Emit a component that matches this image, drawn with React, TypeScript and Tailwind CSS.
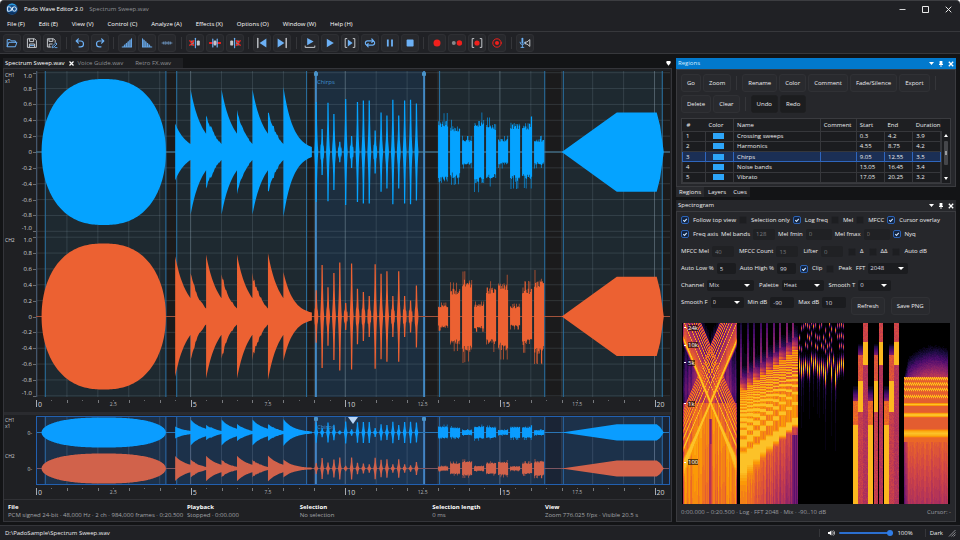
import { useMemo, type ReactNode } from "react";

const DURATION = 20.5;

const REGIONS = [
  { id: 1, name: "Crossing sweeps", start: 0.3, end: 4.2, duration: "3.9" },
  { id: 2, name: "Harmonics", start: 4.55, end: 8.75, duration: "4.2" },
  { id: 3, name: "Chirps", start: 9.05, end: 12.55, duration: "3.5" },
  { id: 4, name: "Noise bands", start: 13.05, end: 16.45, duration: "3.4" },
  { id: 5, name: "Vibrato", start: 17.05, end: 20.25, duration: "3.2" },
];
const SELECTED = 3;

const MENUS = [
  "File (F)",
  "Edit (E)",
  "View (V)",
  "Control (C)",
  "Analyze (A)",
  "Effects (X)",
  "Options (O)",
  "Window (W)",
  "Help (H)",
];

function rand(n: number) {
  const s = Math.sin(n * 127.1 + 11.7) * 43758.5453;
  return s - Math.floor(s);
}

/* ---------- waveforms ---------- */

type Point = [number, number, number?]; // seconds, amplitude up, amplitude down

type Channel = {
  plucks: [number, number][];
  tail: number;
  chirps: number[];
  noise: number[];
  seed: number;
};

const CH1: Channel = {
  plucks: [[0.36, 0.1], [0.79, 0.23], [0.48, 0.1], [0.79, 0.23], [0.5, 0.1], [0.79, 0.23], [0.53, 0.1]],
  tail: 0.8,
  chirps: [0.63, 0.29, 0.62, 0.48, 0.13, 0.67, 0.2, 0.63, 0.65, 0.65, 0.27, 0.5, 0.46, 0.66, 0.46, 0.65, 0.66, 0.61],
  noise: [0.36, 0.3, 0.15, 0.37, 0.32, 0.15, 0.34, 0.33, 0.15],
  seed: 3,
};

const CH2: Channel = {
  plucks: [[0.76, 0.23], [0.52, 0.1], [0.78, 0.23], [0.52, 0.1], [0.78, 0.23], [0.52, 0.1], [0.8, 0.23]],
  tail: 0.54,
  chirps: [0.33, 0.65, 0.37, 0.55, 0.68, 0.17, 0.67, 0.35, 0.31, 0.26, 0.66, 0.54, 0.57, 0.26, 0.57, 0.26, 0.2, 0.39],
  noise: [0.13, 0.32, 0.42, 0.14, 0.33, 0.39, 0.12, 0.33, 0.43],
  seed: 71,
};

function envelope(ch: Channel): Point[][] {
  const shapes: Point[][] = [];

  const sweep: Point[] = [];
  for (let i = 0; i <= 120; i++) {
    const u = -Math.cos((i / 120) * Math.PI);
    sweep.push([2.19 + u * 2.01, 0.92 * Math.pow(Math.max(0, 1 - Math.pow(Math.abs(u), 2.45)), 1 / 2.05)]);
  }
  shapes.push(sweep);

  const harmonics: Point[] = [];
  ch.plucks.forEach(([from, to], n) => {
    const rough = from < 0.6 && from > 0.4 ? 0.08 : 0;
    for (let i = 0; i <= 16; i++) {
      const k = i / 16;
      const amp = to + (from - to) * (Math.exp(-1.7 * k) - Math.exp(-1.7) * k);
      const jag = rough * (rand(i + n * 20 + ch.seed) - 0.4) * (1 - k);
      harmonics.push([4.5 + n * 0.5 + k * 0.5, amp + jag]);
    }
  });
  for (let i = 0; i <= 24; i++) {
    const k = i / 24;
    harmonics.push([8 + k * 0.92, 0.02 + ch.tail * Math.exp(-2.9 * k)]);
  }
  shapes.push(harmonics);

  ch.chirps.forEach((amp, n) => {
    const c = 9.06 + n * 0.1906;
    shapes.push([
      [c - 0.06, 0.02],
      [c - 0.05, 0.09],
      [c - 0.035, amp * 0.35],
      [c - 0.024, amp * 0.6],
      [c - 0.02, amp],
      [c + 0.02, amp],
      [c + 0.03, amp * 0.55],
      [c + 0.04, amp * 0.3],
      [c + 0.055, 0.07],
      [c + 0.065, 0.02],
    ]);
  });

  ch.noise.forEach((amp, n) => {
    const bar: Point[] = [];
    for (let i = 0; i < 16; i++) {
      const a = rand(i + n * 40 + ch.seed * 5);
      const b = rand(i + n * 40 + ch.seed * 9 + 500);
      const up = amp * (0.85 + 0.3 * a + (a > 0.86 ? 0.22 : 0));
      const down = amp * (0.85 + 0.3 * b + (b > 0.84 ? 0.25 : 0));
      const t = 13 + n * 0.388 + i * 0.0203;
      bar.push([t, up, down], [t + 0.0203, up, down]);
    }
    shapes.push(bar);
  });

  shapes.push([
    [17, 0],
    [18.78, 0.5],
    [20.07, 0.5],
    [20.18, 0.33],
    [20.3, 0],
  ]);
  return shapes;
}

function wavePath(shapes: Point[][], mid: number, scale: number) {
  return shapes
    .map((pts) => {
      const up = pts.map(([t, a]) => `${(t * 100).toFixed(1)} ${(mid - a * scale).toFixed(1)}`);
      const down = pts.map(([t, a, d]) => `${(t * 100).toFixed(1)} ${(mid + (d ?? a) * scale).toFixed(1)}`).reverse();
      return `M${up.join("L")}L${down.join("L")}Z`;
    })
    .join("");
}

const CH1_SHAPES = envelope(CH1);
const CH2_SHAPES = envelope(CH2);
const LEVELS = [1, 0.8, 0.6, 0.4, 0.2, 0, -0.2, -0.4, -0.6, -0.8, -1];
const SECONDS = Array.from({ length: 20 }, (_, i) => i + 1);

function MainPlot() {
  return (
    <svg viewBox="0 0 2050 326" preserveAspectRatio="none" className="absolute inset-0 h-full w-full" aria-label="Waveform">
      <rect width="2050" height="326" fill="#1b1b1c" />
      {REGIONS.map((r) => (
        <rect key={r.id} x={r.start * 100} y="0" width={(r.end - r.start) * 100} height="326" fill={r.id === SELECTED ? "#1c2e3f" : "#1e2930"} />
      ))}
      <g stroke="#9fb6c4" strokeWidth="1">
        {SECONDS.map((s) => (
          <line key={s} x1={s * 100} x2={s * 100} y1="0" y2="326" strokeOpacity={s % 5 === 0 ? 0.38 : 0.17} vectorEffect="non-scaling-stroke" />
        ))}
        {[81, 245.5].map((mid) =>
          LEVELS.map((l) => (
            <line key={`${mid}${l}`} x1="0" x2="2050" y1={mid - l * 79.3} y2={mid - l * 79.3} strokeOpacity="0.17" vectorEffect="non-scaling-stroke" />
          )),
        )}
      </g>
      <g strokeWidth="1">
        {REGIONS.map((r) => (
          <g key={r.id} stroke={r.id === SELECTED ? "#4389c4" : "#2b74a6"} strokeWidth={r.id === SELECTED ? 2 : 1}>
            <line x1={r.start * 100} x2={r.start * 100} y1="0" y2="326" vectorEffect="non-scaling-stroke" />
            <line x1={r.end * 100} x2={r.end * 100} y1="0" y2="326" vectorEffect="non-scaling-stroke" />
          </g>
        ))}
        <line x1="1" x2="1" y1="0" y2="326" stroke="#44566c" strokeWidth="2" vectorEffect="non-scaling-stroke" />
        <line x1="0" x2="2050" y1="81" y2="81" stroke="#4c87a8" vectorEffect="non-scaling-stroke" />
        <line x1="0" x2="2050" y1="245.5" y2="245.5" stroke="#a3523a" vectorEffect="non-scaling-stroke" />
      </g>
      <path d={wavePath(CH1_SHAPES, 81, 79.3)} fill="#05a3ff" />
      <path d={wavePath(CH2_SHAPES, 245.5, 79.3)} fill="#ec6132" />
    </svg>
  );
}

function OverviewPlot() {
  return (
    <svg viewBox="0 0 2050 69" preserveAspectRatio="none" className="absolute inset-0 h-full w-full" aria-label="Overview">
      <rect width="2050" height="69" fill="#1a2435" />
      {REGIONS.map((r) => (
        <rect key={r.id} x={r.start * 100} y="0" width={(r.end - r.start) * 100} height="69" fill={r.id === SELECTED ? "#1b3553" : "#1c314a"} />
      ))}
      {SECONDS.map((s) => (
        <line key={s} x1={s * 100} x2={s * 100} y1="0" y2="69" stroke="#9fb6d4" strokeOpacity={s % 5 === 0 ? 0.4 : 0.18} vectorEffect="non-scaling-stroke" />
      ))}
      {REGIONS.map((r) => (
        <g key={r.id} stroke={r.id === SELECTED ? "#4383c4" : "#2b6cab"} strokeWidth={r.id === SELECTED ? 2 : 1}>
          <line x1={r.start * 100} x2={r.start * 100} y1="0" y2="69" vectorEffect="non-scaling-stroke" />
          <line x1={r.end * 100} x2={r.end * 100} y1="0" y2="69" vectorEffect="non-scaling-stroke" />
        </g>
      ))}
      <line x1="0" x2="2050" y1="16.5" y2="16.5" stroke="#2a74b4" vectorEffect="non-scaling-stroke" />
      <line x1="0" x2="2050" y1="52.5" y2="52.5" stroke="#7d5560" vectorEffect="non-scaling-stroke" />
      <path d={wavePath(CH1_SHAPES, 16.5, 16.3)} fill="#0a9dff" />
      <path d={wavePath(CH2_SHAPES, 52.5, 16.3)} fill="#d1624b" />
      <rect x="0" y="0" width="2050" height="69" fill="none" stroke="#2260b0" strokeWidth="2" vectorEffect="non-scaling-stroke" />
    </svg>
  );
}

function RegionMarks({ label }: { label: string }) {
  const r = REGIONS[SELECTED - 1];
  return (
    <>
      {[r.start, r.end].map((t) => (
        <span key={t} className="absolute top-px size-1 -translate-x-1/2 rounded-[1px] bg-[#4a93c8]" style={{ left: `${(t / DURATION) * 100}%` }} />
      ))}
      <span className="absolute top-[7px] pl-px text-[6px] leading-[8px] text-[#3f8fd0]" style={{ left: `${(r.start / DURATION) * 100}%` }}>
        {label}
      </span>
    </>
  );
}

function Ruler() {
  const marks = Array.from({ length: 41 }, (_, i) => i * 0.5);
  return (
    <div className="relative ml-8 mr-px h-3.5">
      {marks.map((t) => (
        <span
          key={t}
          className={`absolute top-[3px] w-px ${t % 5 === 0 ? "h-[7px] bg-[#a8abb0]" : t % 1 === 0 ? "h-[3px] bg-[#77797d]" : "h-px bg-[#66686c]"}`}
          style={{ left: `${(t / DURATION) * 100}%` }}
        />
      ))}
      {[0, 5, 10, 15, 20].map((t) => (
        <span key={t} className="absolute top-[3px] pl-0.5 text-[7px] leading-[9px] text-[#d3d5d8]" style={{ left: `${(t / DURATION) * 100}%` }}>
          {t}
        </span>
      ))}
      {[2.5, 7.5, 12.5, 17.5].map((t) => (
        <span key={t} className="absolute top-[3px] -translate-x-1/2 text-[5px] leading-[9px] text-[#b4b6ba]" style={{ left: `${(t / DURATION) * 100}%` }}>
          {t}
        </span>
      ))}
    </div>
  );
}

function levelTop(mid: number, level: number) {
  const nudge = level === 1 ? 3 : level === -1 ? -3 : 0;
  return `${((mid - level * 79.3 + nudge) / 326) * 100}%`;
}

function LevelAxis() {
  return (
    <div className="relative w-8 shrink-0 text-[6px] leading-[8px] text-[#d3d5d8]">
      <div className="absolute left-px top-px flex flex-col text-[5px] leading-[6px]">
        <span>CH1</span>
        <span>x1</span>
      </div>
      <span className="absolute left-px top-[165px] text-[5px]">CH2</span>
      {[81, 245.5].map((mid) =>
        LEVELS.map((l) => (
          <span key={`${mid}${l}`} className="absolute right-1 -translate-y-1/2" style={{ top: levelTop(mid, l) }}>
            {l === 0 ? "0" : l.toFixed(1)}
          </span>
        )),
      )}
      {[81, 245.5].map((mid) =>
        LEVELS.map((l) => (
          <span key={`t${mid}${l}`} className="absolute right-0 h-px w-[3px] bg-[#6a6c70]" style={{ top: `${((mid - l * 79.3) / 326) * 100}%` }} />
        )),
      )}
    </div>
  );
}

/* ---------- spectrogram ---------- */

const HEAT = ["#000004", "#1b0c41", "#4a0c6b", "#781c6d", "#a52c60", "#cf4446", "#ed6925", "#fb9b06", "#fcc228"];
const STEPS = 32;
const SPEC_W = 268;
const SPEC_H = 181;

function heatColor(v: number) {
  const p = Math.min(0.9999, Math.max(0, v)) * (HEAT.length - 1);
  const i = Math.floor(p);
  const f = p - i;
  const ch = (hex: string, n: number) => parseInt(hex.slice(1 + n * 2, 3 + n * 2), 16);
  const mix = [0, 1, 2].map((n) => Math.round(ch(HEAT[i], n) + (ch(HEAT[i + 1], n) - ch(HEAT[i], n)) * f));
  return `rgb(${mix.join(",")})`;
}

const freqAt = (y: number) => 24000 * Math.pow(10, -y / 58.6);
const yAt = (f: number) => 58.6 * Math.log10(24000 / f);

function sweeps(x: number, y: number) {
  const d = x - 28;
  const f = freqAt(y);
  const w = 1.1 + 58.6 * Math.log10(1 + 22 / f);
  const side = Math.abs(d);
  let v = 0;
  for (let k = 1; k <= 9; k++) {
    const off = 58.6 * Math.log10(k);
    for (const s of [-1, 1]) {
      const line = 79 + s * d * 2.36 - off;
      const q = (y - line) / (k === 1 ? w * 2 + 1 : w);
      v = Math.max(v, (1.08 - k * 0.035) * Math.exp(-q * q * 0.5));
    }
  }
  const arm = 79 + side * 2.36;
  const wing = 79 - side * 2.36;
  const streak = rand(x * 3.1) * 0.16;
  if (y > arm) {
    const depth = Math.min(1, (y - arm) / 90);
    v = Math.max(v, 0.92 - depth * 0.08 - streak);
  } else if (y > 79) {
    v = Math.max(v, 0.86 * Math.exp(-(arm - y) / 220) - streak);
  } else if (y > wing) {
    v = Math.max(v, 0.8 - side * 0.018 - Math.abs(y - 66) * 0.005 - streak);
  } else {
    v = Math.max(v, 0.8 - (wing - y) / 90 - streak * 0.5);
  }
  if (y > 95 && side < 2) v = Math.min(v, 0.42 + side * 0.12);
  if (y > 120) v = Math.max(v, 0.78 - streak * 0.8 - (side < 6 ? 0.12 : 0));
  if (y < 18 && side < 9 - y * 0.45) v = Math.min(v, 0.14 + y * 0.012);
  return x < 2 || x > 53 ? v * 0.75 : v;
}

function plucked(x: number, y: number) {
  const n = Math.min(8, Math.floor((x - 58) / 6.5));
  const inner = ((x - 58) % 6.5) / 6.5;
  const f0 = 110 * Math.pow(2, n * 0.28);
  const f = freqAt(y);
  const w = 1.1 + 58.6 * Math.log10(1 + 34 / f);
  const roof = yAt(f0 * 26);
  let v = 0;
  for (let k = 1; k <= 26; k++) {
    const yk = yAt(f0 * k);
    const q = (y - yk) / (k === 1 ? w * 2 : k < 7 ? w * 1.3 : w * 0.8);
    v = Math.max(v, (1.15 - k * 0.016) * Math.exp(-q * q * 0.5));
  }
  const base = yAt(f0);
  const floor = y < base ? 0.88 - Math.max(0, 75 - y) * 0.007 : 0.94 - (y - base) * 0.0024 - n * 0.035;
  v = Math.max(v, floor - rand(x * 1.7) * 0.12);
  if (n === 8 && y > base + 14) v = Math.min(v, 0.42 - rand(x) * 0.14);
  if (y < roof + 12) v *= Math.max(0.04, 1 - (roof + 12 - y) / 26) * (1 - inner * 0.3);
  if (y < roof && inner < 0.28) v = Math.max(v, 0.48 - (roof - y) * 0.007);
  return v;
}

function chirpMarks(x: number, y: number) {
  const col = Math.floor(x) - 117;
  const n = Math.floor(col / 2);
  const bright = rand(n * 5.3 + 2);
  const zig = Math.abs((col % 15) - 7.5) / 7.5;
  const c = 48 - zig * 7 + (bright - 0.5) * 16;
  const lit = col % 2 === 0 ? 1 : 0.12;
  const q = (y - c) / (4.5 + bright * 4);
  let v = (0.95 + bright * 0.15) * Math.exp(-q * q * 0.7) * lit;
  for (const row of [3, 14, 24]) {
    const q2 = (y - row - (bright - 0.5) * 8) / 2.6;
    const on = rand(n * 3 + row);
    if (on > 0.3) v = Math.max(v, (0.45 + on * 0.4) * Math.exp(-q2 * q2) * lit);
  }
  if (y > c && bright > 0.45) v = Math.max(v, 0.3 * lit * Math.exp(-(y - c) / (4 + bright * 22)));
  return x > 161 ? 0 : v;
}

function bands(x: number, y: number) {
  const slot = Math.floor((x - 170) / 5.15);
  const inner = x - 170 - slot * 5.15;
  if (slot > 8 || inner < 0.5) return 0;
  const grain = rand(x * 7 + y * 13) * 0.07;
  const kind = slot % 3;
  if (kind === 0) {
    if (y > 101) return 0.97;
    if (y > 77) return 0.7 + grain;
    return Math.max(0, 0.42 - (77 - y) / 35);
  }
  if (kind === 1) {
    if (y > 88) return 0.56 + grain;
    if (y > 57) return 0.97;
    if (y > 31) return 0.64 + grain;
    return Math.max(0, 0.38 - (31 - y) / 30);
  }
  if (y > 41) return 0.5 + grain;
  if (y > 18) return 0.97;
  return 0.58 + grain;
}

const VIBRATO_LINES = [55, 60.5, 66, 73, 81, 91.5, 110];

function vibrato(x: number, y: number) {
  const dome = 20 + Math.pow(Math.abs(x - 252) / 30, 2) * 16;
  if (y < dome) return 0;
  const edge = x < 226 ? (226 - x) * 0.06 : 0;
  if (y < 54) return Math.min(0.72, (y - dome) * 0.018) - edge - rand(x + y * 31) * 0.05;
  let v = y > 114 ? 0.76 - (y - 114) * 0.003 : 0.72;
  VIBRATO_LINES.forEach((line, i) => {
    const ripple = i < 4 ? ((Math.floor(x) % 2) - 0.5) * 1.4 : 0;
    const q = (y - line - ripple) / (i === 6 ? 5.2 : i === 5 ? 3 : 1.7);
    v = Math.max(v, Math.exp(-q * q * 0.45));
  });
  return v - (y > 118 ? rand(x * 2.3) * 0.07 + edge : 0);
}

function energy(x: number, y: number) {
  if (x >= 1 && x < 54.5) return sweeps(x, y);
  if (x >= 58 && x < 116) return plucked(x, y);
  if (x >= 117 && x < 163) return chirpMarks(x, y);
  if (x >= 170 && x < 217) return bands(x, y);
  if (x >= 222 && x < 266) return vibrato(x, y);
  return 0;
}

function Spectrogram() {
  // One path per palette step, made of vertical runs of equal cells.
  const layers = useMemo(() => {
    const parts: string[][] = Array.from({ length: STEPS }, () => []);
    for (let x = 0; x < SPEC_W; x++) {
      let start = 0;
      let last = -1;
      for (let y = 0; y <= SPEC_H; y++) {
        const level = y === SPEC_H ? -2 : Math.round(Math.min(1, Math.max(0, energy(x, y))) * (STEPS - 1));
        if (level === last) continue;
        if (last > 0) parts[last].push(`M${x} ${start}h1v${y - start}h-1z`);
        start = y;
        last = level;
      }
    }
    return parts.map((p) => p.join(""));
  }, []);

  return (
    <svg viewBox={`0 0 ${SPEC_W} ${SPEC_H}`} preserveAspectRatio="none" shapeRendering="crispEdges" className="absolute inset-0 h-full w-full" aria-label="Spectrogram">
      <rect width={SPEC_W} height={SPEC_H} fill="#000" />
      {layers.map((d, i) => d && <path key={i} d={d} fill={heatColor(i / (STEPS - 1))} />)}
    </svg>
  );
}

/* ---------- icons ---------- */

function Icon({ children }: { children: ReactNode }) {
  return (
    <svg viewBox="0 0 12 12" className="size-3" fill="none" strokeLinecap="round" strokeLinejoin="round">
      {children}
    </svg>
  );
}

const BLUE = "#6cb0f5";
const RED = "#f0201c";
const GREY = "#c3c6cb";

const TOOL_GROUPS: { name: string; icon: ReactNode }[][] = [
  [
    { name: "Open", icon: <path d="M1.2 9.4V2.6h3l1 1.3h4.2v1.4M1.2 9.4l1.5-4.1h8.2L9.5 9.4z" stroke={BLUE} /> },
    {
      name: "Save",
      icon: (
        <>
          <path d="M1.8 1.8h6.8l1.8 1.8v6.8H1.8z" stroke={GREY} />
          <path d="M3.6 2v2.6h4V2M3.4 10.2V7h5.2v3.2" stroke={GREY} />
          <path d="M4.2 8.4h3.4" stroke={BLUE} />
        </>
      ),
    },
    {
      name: "Save as",
      icon: (
        <>
          <path d="M5 10H1.4V1.8h6.2l1.6 1.6v2" stroke={GREY} />
          <path d="M3 2v2.4h3.8V2M3.2 10V7h3" stroke={GREY} />
          <path d="M6.4 10.4l.4-1.6 3-3 1.2 1.2-3 3zM9 10.6h2" stroke={BLUE} strokeWidth="0.9" />
        </>
      ),
    },
  ],
  [
    { name: "Undo", icon: <path d="M4.4 1.8L2.2 4l2.2 2.2M2.4 4h4.2a2.9 2.9 0 0 1 0 5.8H5" stroke={BLUE} strokeWidth="1.2" /> },
    { name: "Redo", icon: <path d="M7.6 1.8L9.8 4 7.6 6.2M9.6 4H5.4a2.9 2.9 0 0 0 0 5.8H7" stroke={BLUE} strokeWidth="1.2" /> },
  ],
  [
    {
      name: "Fade in",
      icon: (
        <>
          <path d="M1.4 9.8L10.4 1.6v8.2z" fill={BLUE} fillOpacity="0.45" />
          <path d="M3.6 9.6V8M5.4 9.6V6.4M7.2 9.6V4.8M9 9.6V3.2M10.5 9.6V1.8M1.2 10h9.4" stroke={BLUE} strokeWidth="0.9" />
        </>
      ),
    },
    {
      name: "Fade out",
      icon: (
        <>
          <path d="M1.6 1.6v8.2h9z" fill={BLUE} fillOpacity="0.45" />
          <path d="M1.5 9.6V1.8M3 9.6V3.2M4.8 9.6V4.8M6.6 9.6V6.4M8.4 9.6V8M1.4 10h9.4" stroke={BLUE} strokeWidth="0.9" />
        </>
      ),
    },
    { name: "Silence", icon: <path d="M1 6h10M2.4 5v2M4.2 4.6v2.8M6 5v2M7.8 4.6v2.8M9.6 5v2" stroke="#6a8fb8" strokeWidth="0.9" /> },
  ],
  [
    {
      name: "Delete before",
      icon: (
        <>
          <rect x="1.8" y="3.4" width="3" height="5.2" rx="1" fill="#8d8f93" />
          <path d="M.8 3.8l4 4.4M4.8 3.8l-4 4.4" stroke={RED} strokeWidth="1.3" />
          <path d="M6.4 1.2v9.6" stroke={BLUE} strokeWidth="1.1" />
          <rect x="7.8" y="3.4" width="3" height="5.2" rx="1.2" fill={GREY} />
        </>
      ),
    },
    {
      name: "Trim",
      icon: (
        <>
          <path d="M.6 6h10.8" stroke={RED} strokeWidth="1.8" />
          <rect x="4.6" y="3.4" width="2.8" height="5.2" rx="1" fill={GREY} />
          <path d="M3.8 2v8M8.2 2v8" stroke={BLUE} strokeWidth="1.2" />
        </>
      ),
    },
    {
      name: "Delete after",
      icon: (
        <>
          <rect x="1.2" y="3.4" width="3" height="5.2" rx="1.2" fill={GREY} />
          <path d="M5.6 1.2v9.6" stroke={BLUE} strokeWidth="1.1" />
          <rect x="7.2" y="3.4" width="3" height="5.2" rx="1" fill="#8d8f93" />
          <path d="M7.2 3.8l4 4.4M11.2 3.8l-4 4.4" stroke={RED} strokeWidth="1.3" />
        </>
      ),
    },
  ],
  [
    {
      name: "Go to start",
      icon: (
        <>
          <path d="M10.4 1.6v8.8L3.6 6z" fill={BLUE} />
          <path d="M1.8 1.4v9.2" stroke={GREY} strokeWidth="1.4" />
        </>
      ),
    },
    {
      name: "Go to end",
      icon: (
        <>
          <path d="M1.6 1.6v8.8L8.4 6z" fill={BLUE} />
          <path d="M10.2 1.4v9.2" stroke={GREY} strokeWidth="1.4" />
        </>
      ),
    },
  ],
  [
    {
      name: "Play from here",
      icon: (
        <>
          <path d="M3.2 1v7.2L9.6 4.6z" fill={BLUE} />
          <path d="M1.2 9v1.4h9.6V9" stroke={GREY} />
        </>
      ),
    },
    { name: "Play", icon: <path d="M2.8 1.8v8.4L9.8 6z" fill={BLUE} /> },
    {
      name: "Play selection",
      icon: (
        <>
          <path d="M3.8 2.6v6.8L8.6 6z" fill={BLUE} />
          <path d="M2.8 1.6H1.2v8.8h1.6M9.2 1.6h1.6v8.8H9.2" stroke={GREY} />
        </>
      ),
    },
    { name: "Loop", icon: <path d="M2.8 8.2A2.3 2.3 0 0 1 3.2 3.8h6.2M7.8 2L9.6 3.8 7.8 5.4M9.2 3.8A2.3 2.3 0 0 1 8.8 8.2h-6.2M4.2 6.6L2.6 8.2l1.6 1.6" stroke={BLUE} strokeWidth="1.2" /> },
    { name: "Pause", icon: <path d="M3.8 2.4v7.2M8 2.4v7.2" stroke={BLUE} strokeWidth="1.8" strokeLinecap="butt" /> },
    { name: "Stop", icon: <rect x="2.6" y="2.6" width="7" height="7" rx="0.8" fill={BLUE} /> },
  ],
  [
    { name: "Record", icon: <circle cx="6" cy="6" r="3.5" fill={RED} /> },
    {
      name: "Record append",
      icon: (
        <>
          <circle cx="2.8" cy="6" r="2" fill="#85878b" />
          <circle cx="8.4" cy="6" r="2.7" fill={RED} />
        </>
      ),
    },
    {
      name: "Record selection",
      icon: (
        <>
          <circle cx="6" cy="6" r="2.6" fill={RED} />
          <path d="M2.8 1.6H1.2v8.8h1.6M9.2 1.6h1.6v8.8H9.2" stroke={GREY} />
        </>
      ),
    },
    {
      name: "Record over",
      icon: (
        <>
          <circle cx="6" cy="6" r="4.2" stroke={RED} />
          <circle cx="6" cy="6" r="2" fill={RED} />
        </>
      ),
    },
  ],
  [
    {
      name: "Monitor",
      icon: (
        <>
          <path d="M3.4 1.6v4.2" stroke={BLUE} strokeWidth="1.8" />
          <path d="M1 5.2a2.4 2.4 0 0 0 4.8 0M3.4 7.8v2.6M2 10.4h2.8" stroke={BLUE} strokeWidth="0.9" />
          <path d="M6.8 5h1.2l2.8-2.4v6.8L8 7H6.8z" stroke={GREY} strokeWidth="1" />
        </>
      ),
    },
  ],
];

function Logo() {
  return (
    <svg viewBox="0 0 12 12" className="size-3">
      <circle cx="6" cy="6" r="5.8" fill="#15508f" />
      <path d="M1.4 3.2A5.4 5.4 0 0 1 10.8 3.4L9 2.6 6 1.8z" fill="#2fa0e0" />
      <path d="M1.5 9l2.5 1.8 4 .2 2.5-2L8 9.4z" fill="#0b2e59" />
      <path d="M1.6 8.2V3.8h1.6a2.2 2.2 0 0 1 0 4.4zM6.4 6a2 2.2 0 1 1 4 0 2 2.2 0 1 1-4 0zM5.2 7.8l1.6-3.6" fill="none" stroke="#d9ecfb" strokeWidth="1" />
    </svg>
  );
}

function PanelTools() {
  return (
    <span className="flex items-center gap-[5px]">
      <button type="button" aria-label="Panel menu">
        <svg viewBox="0 0 5 3" className="h-[3px] w-[5px]"><path d="M0 0h5L2.5 3z" fill="#fff" /></svg>
      </button>
      <button type="button" aria-label="Pin panel">
        <svg viewBox="0 0 4 6" className="h-1.5 w-1"><path d="M.6 0h2.8v3H4v.9H2.4V6h-.8V3.9H0V3h.6z" fill="#fff" /></svg>
      </button>
      <button type="button" aria-label="Close panel">
        <svg viewBox="0 0 6 6" className="size-1.5"><path d="M.8.8l4.4 4.4M5.2.8L.8 5.2" stroke="#fff" strokeWidth="1.3" /></svg>
      </button>
    </span>
  );
}

/* ---------- form controls ---------- */

function Check({ label, checked = false }: { label: string; checked?: boolean }) {
  return (
    <label className="flex items-center gap-1">
      <span className="relative size-2">
        <input
          type="checkbox"
          defaultChecked={checked}
          className="peer block size-2 appearance-none rounded-[2px] border border-[#222327] bg-[#1d1e21] checked:border-[#2b62b4] checked:bg-[#12233f]"
        />
        <svg viewBox="0 0 8 8" className="pointer-events-none absolute inset-0 hidden size-2 peer-checked:block">
          <path d="M2.2 4.2l1.3 1.2L5.8 2.8" fill="none" stroke="#cfe2fb" strokeWidth="1.1" />
        </svg>
      </span>
      {label}
    </label>
  );
}

function Field({ label, value, width, disabled = false }: { label: string; value: string; width: string; disabled?: boolean }) {
  return (
    <label className="flex items-center gap-[3px]">
      {label}
      <input
        type="text"
        defaultValue={value}
        disabled={disabled}
        className={`h-[11px] rounded-[2px] bg-[#1b1c1f] pl-[3px] text-[#dcdde0] disabled:bg-[#202124] disabled:text-[#77797e] ${width}`}
      />
    </label>
  );
}

function Choice({ label, value, width }: { label: string; value: string; width: string }) {
  return (
    <label className="flex items-center gap-[3px]">
      {label}
      <span className={`relative ${width}`}>
        <select defaultValue={value} className="block h-[11px] w-full appearance-none rounded-[2px] bg-[#1b1c1f] pl-[2px] text-[#dcdde0]">
          <option>{value}</option>
        </select>
        <svg viewBox="0 0 6 3" className="pointer-events-none absolute right-1 top-1 h-[3px] w-1.5">
          <path d="M0 0h6L3 3z" fill="#fff" />
        </svg>
      </span>
    </label>
  );
}

function PanelButton({ children, dark = false }: { children: string; dark?: boolean }) {
  return (
    <button type="button" className={`h-[18px] rounded-[3px] border px-[5px] ${dark ? "border-[#1e1f21] bg-[#1c1d1f]" : "border-[#303135] bg-[#292a2e]"}`}>
      {children}
    </button>
  );
}

const Separator = () => <span className="mx-[3px] h-3.5 w-px bg-[#35363a]" />;

/* ---------- panels ---------- */

function RegionsPanel() {
  return (
    <section>
      <header className="flex h-[11px] items-center justify-between bg-[#0279cd] px-0.5 text-[#d4ecff]">
        <h2>Regions</h2>
        <PanelTools />
      </header>
      <div className="border border-[#3a3b3f] bg-[#26272b] px-1 pb-0.5 pt-1">
        <div className="flex flex-wrap items-center gap-x-0.5 gap-y-[3px]">
          <PanelButton>Go</PanelButton>
          <PanelButton>Zoom</PanelButton>
          <Separator />
          <PanelButton>Rename</PanelButton>
          <PanelButton>Color</PanelButton>
          <PanelButton>Comment</PanelButton>
          <PanelButton>Fade/Silence</PanelButton>
          <PanelButton>Export</PanelButton>
          <Separator />
          <PanelButton>Delete</PanelButton>
          <PanelButton>Clear</PanelButton>
          <Separator />
          <PanelButton dark>Undo</PanelButton>
          <PanelButton dark>Redo</PanelButton>
        </div>
        <div className="mt-[5px] flex border border-[#3a3b3f] bg-[#1b1c1f]">
          <table className="h-[64px] flex-1 table-fixed border-collapse text-left leading-[8px]">
            <thead>
              <tr className="h-3 bg-[#1e1f22]">
                <th className="w-[9%] pl-1 font-normal">#</th>
                <th className="w-[11%] border-r border-[#36373b] pl-[3px] font-normal">Color</th>
                <th className="w-[34%] border-r border-[#36373b] pl-[3px] font-normal">Name</th>
                <th className="w-[14%] border-r border-[#36373b] pl-[3px] font-normal">Comment</th>
                <th className="w-[11%] pl-[3px] font-normal">Start</th>
                <th className="w-[11%] pl-[3px] font-normal">End</th>
                <th className="pl-[3px] font-normal">Duration</th>
              </tr>
            </thead>
            <tbody>
              {REGIONS.map((r) => {
                const cell = r.id === SELECTED ? "border border-[#2f66bd] p-0 pl-[3px]" : "border border-[#36373b] p-0 pl-[3px]";
                return (
                  <tr key={r.id} className={r.id === SELECTED ? "bg-[#1b2f55]" : ""}>
                    <td className={cell}>{r.id}</td>
                    <td className={cell}>
                      <span className="ml-1 block h-1.5 w-[11px] bg-[#2da5f8]" />
                    </td>
                    <td className={cell}>{r.name}</td>
                    <td className={cell} />
                    <td className={cell}>{r.start}</td>
                    <td className={cell}>{r.end}</td>
                    <td className={cell}>{r.duration}</td>
                  </tr>
                );
              })}
            </tbody>
          </table>
          <div className="mt-3 flex w-[9px] flex-col items-center justify-between border-l border-[#36373b] py-[3px]">
            <svg viewBox="0 0 4 3" className="h-[3px] w-1"><path d="M0 3h4L2 0z" fill="#fff" /></svg>
            <span className="mb-2 flex h-6 w-1 items-center justify-center rounded-[1px] bg-[#45464a]">
              <span className="h-1 w-0.5 bg-[#9a9ca0]" />
            </span>
            <svg viewBox="0 0 4 3" className="h-[3px] w-1"><path d="M0 0h4L2 3z" fill="#fff" /></svg>
          </div>
        </div>
      </div>
      <div className="flex h-2.5 w-fit items-center bg-[#1e1f22]">
        <button type="button" className="h-full bg-[#292a2e] px-[3px]">Regions</button>
        <button type="button" className="h-full px-1">Layers</button>
        <button type="button" className="h-full px-[3px]">Cues</button>
      </div>
    </section>
  );
}

function SpectrogramPanel() {
  const ticks = [
    { label: "24k", f: 20000 },
    { label: "10k", f: 10000 },
    { label: "5k", f: 5000 },
    { label: "1k", f: 1000 },
    { label: "100", f: 100 },
  ];
  return (
    <section className="mt-[3px] flex flex-1 flex-col">
      <header className="flex h-[11px] items-center justify-between bg-[#26272b] px-0.5">
        <h2>Spectrogram</h2>
        <PanelTools />
      </header>
      <div className="flex flex-1 flex-col border border-[#3a3b3f] bg-[#26272b] px-1">
        <div className="flex h-4 items-center gap-[3px]">
          <Check label="Follow top view" checked />
          <Check label="Selection only" />
          <Check label="Log freq" checked />
          <Check label="Mel" />
          <Check label="MFCC" />
          <Check label="Cursor overlay" checked />
        </div>
        <div className="flex h-3 items-center gap-[3px]">
          <Check label="Freq axis" checked />
          <Field label="Mel bands" value="128" width="w-[22px]" disabled />
          <Field label="Mel fmin" value="0" width="w-[26px]" disabled />
          <Field label="Mel fmax" value="0" width="w-[26px]" disabled />
          <Check label="Nyq" checked />
        </div>
        <div className="mt-1.5 flex h-[11px] items-center gap-[5px]">
          <Field label="MFCC Mel" value="40" width="w-[22px]" disabled />
          <Field label="MFCC Count" value="13" width="w-[22px]" disabled />
          <Field label="Lifter" value="0" width="w-[22px]" disabled />
          <Check label="Δ" />
          <Check label="ΔΔ" />
          <Check label="Auto dB" />
        </div>
        <div className="mt-1.5 flex h-[11px] items-center gap-1">
          <Field label="Auto Low %" value="5" width="w-[19px]" />
          <Field label="Auto High %" value="99" width="w-[19px]" />
          <Check label="Clip" checked />
          <Check label="Peak" />
          <Choice label="FFT" value="2048" width="w-10" />
        </div>
        <div className="mt-1.5 flex h-[11px] items-center gap-[5px]">
          <Choice label="Channel" value="Mix" width="w-[47px]" />
          <Choice label="Palette" value="Heat" width="w-[42px]" />
          <Choice label="Smooth T" value="0" width="w-[33px]" />
        </div>
        <div className="mt-1 flex items-start gap-[5px]">
          <div className="flex h-[15px] items-center gap-1">
            <Choice label="Smooth F" value="0" width="w-[33px]" />
            <Field label="Min dB" value="-90" width="w-6" />
            <Field label="Max dB" value="10" width="w-6" />
          </div>
          <div className="mt-0.5 flex gap-1.5">
            <PanelButton>Refresh</PanelButton>
            <PanelButton>Save PNG</PanelButton>
          </div>
        </div>
        <div className="relative mx-px mt-2 min-h-[180px] flex-1">
          <Spectrogram />
          {ticks.map((t) => (
            <span
              key={t.label}
              className="absolute left-0.5 flex -translate-y-1/2 items-center gap-0.5 text-[6px] leading-[6px] text-white"
              style={{ top: `${(yAt(t.f) / SPEC_H) * 100}%` }}
            >
              <span className="h-px w-0.5 bg-white" />
              <span className="bg-black/60">{t.label}</span>
            </span>
          ))}
        </div>
        <footer className="flex h-[17px] items-center justify-between text-[#9b9da1]">
          <span>0:00.000 – 0:20.500 · Log · FFT 2048 · Mix · -90..10 dB</span>
          <span>Cursor: -</span>
        </footer>
      </div>
    </section>
  );
}

function Fact({ title, value, className }: { title: string; value: string; className: string }) {
  return (
    <div className={className}>
      <dt className="font-bold text-white">{title}</dt>
      <dd className="text-[#a3a5a9]">{value}</dd>
    </div>
  );
}

function WavePanel() {
  return (
    <main className="flex min-w-0 flex-1 flex-col">
      <div className="flex h-2.5 items-center justify-between pr-px">
        <div className="flex h-full items-center bg-[#1e1f22] text-[#8d8f93]">
          <button type="button" className="pl-0.5 text-white">Spectrum Sweep.wav</button>
          <button type="button" aria-label="Close Spectrum Sweep.wav" className="px-1">
            <svg viewBox="0 0 5 5" className="size-[5px]"><path d="M.5.5l4 4M4.5.5l-4 4" stroke="#fff" strokeWidth="1.2" /></svg>
          </button>
          <button type="button" className="pr-3">Voice Guide.wav</button>
          <button type="button" className="pr-3">Retro FX.wav</button>
        </div>
        <button type="button" aria-label="Tab list">
          <svg viewBox="0 0 5 5" className="size-[5px]"><path d="M.5 0h4v1.4H5L2.5 4.8 0 1.4h.5z" fill="#fff" /></svg>
        </button>
      </div>
      <div className="flex flex-1 flex-col border border-[#34353a] bg-[#1f2023]">
        <div className="flex min-h-80 flex-1 pt-0.5">
          <LevelAxis />
          <div className="relative mr-px flex-1">
            <MainPlot />
            <RegionMarks label="Chirps" />
          </div>
        </div>
        <Ruler />
        <div className="mt-px h-[3px] bg-[#2a2b2f]" />
        <div className="mt-px flex h-[69px]">
          <div className="relative w-8 shrink-0 text-[5px] leading-[6px] text-[#c9cbce]">
            <div className="absolute left-px top-px flex flex-col">
              <span>CH1</span>
              <span>x1</span>
            </div>
            <span className="absolute left-px top-[37px]">CH2</span>
            <span className="absolute right-1 top-3.5">0-</span>
            <span className="absolute right-1 top-[50px]">0-</span>
          </div>
          <div className="relative mr-px flex-1">
            <OverviewPlot />
            <RegionMarks label="Chirps" />
            <svg viewBox="0 0 10 7" className="absolute left-1/2 top-px h-[7px] w-2.5 -translate-x-1/2">
              <path d="M0 0h10L5 7z" fill="#b9d6f7" />
            </svg>
          </div>
        </div>
        <Ruler />
        <dl className="flex h-[22px] items-center border-t border-[#303135] pl-1 leading-[8px]">
          <Fact className="w-[27%]" title="File" value="PCM signed 24-bit · 48,000 Hz · 2 ch · 984,000 frames · 0:20.500" />
          <Fact className="w-[17%]" title="Playback" value="Stopped · 0:00.000" />
          <Fact className="w-[20%]" title="Selection" value="No selection" />
          <Fact className="w-[17%]" title="Selection length" value="0 ms" />
          <Fact className="flex-1" title="View" value="Zoom 776.025 f/px · Visible 20.5 s" />
        </dl>
      </div>
    </main>
  );
}

export default function App() {
  return (
    <div className="flex min-h-screen flex-col overflow-hidden rounded-t-[4px] border-t border-[#3c3d41] bg-[#202125] font-['Open_Sans','Noto_Sans',sans-serif] text-[6px] leading-[9px] text-[#ebecee]">
      <header>
        <div className="flex h-4 items-center justify-between pl-1.5 pr-2">
          <div className="flex items-center gap-1.5">
            <Logo />
            <h1 className="font-medium text-white">Pado Wave Editor 2.0</h1>
            <span className="text-[#8f9195]">Spectrum Sweep.wav</span>
          </div>
          <div className="flex items-center gap-4">
            <button type="button" aria-label="Minimize">
              <svg viewBox="0 0 7 7" className="size-[7px]"><path d="M.5 3.5h6" stroke="#d5d6d8" /></svg>
            </button>
            <button type="button" aria-label="Maximize">
              <svg viewBox="0 0 7 7" className="size-[7px]"><path d="M.5.5h6v6h-6z" fill="none" stroke="#e8e8e8" /></svg>
            </button>
            <button type="button" aria-label="Close">
              <svg viewBox="0 0 7 7" className="size-[7px]"><path d="M.7.7l5.6 5.6M6.3.7L.7 6.3" stroke="#e8e8e8" /></svg>
            </button>
          </div>
        </div>
        <nav className="flex h-3.5 items-center gap-3.5 pl-[7px] pt-px text-white">
          {MENUS.map((m) => (
            <button type="button" key={m}>{m}</button>
          ))}
        </nav>
        <div className="flex h-[23px] items-center border-y border-[#37383c] pl-0.5" role="toolbar">
          {TOOL_GROUPS.map((group, i) => (
            <div key={i} className="flex items-center">
              {i > 0 && <span className={`flex h-3 justify-center ${i % 2 ? "w-2" : "w-[7px]"}`}><span className="w-px bg-[#35363a]" /></span>}
              {group.map((tool) => (
                <button key={tool.name} type="button" aria-label={tool.name} className="mx-px flex size-[18px] items-center justify-center rounded-[3px] border border-[#2e2f33] bg-[#27282c]">
                  <Icon>{tool.icon}</Icon>
                </button>
              ))}
            </div>
          ))}
        </div>
      </header>
      <div className="flex flex-1 gap-1 bg-[#131416] pb-[3px] pl-[3px] pr-1 pt-1">
        <WavePanel />
        <aside className="flex w-[280px] shrink-0 flex-col">
          <RegionsPanel />
          <SpectrogramPanel />
        </aside>
      </div>
      <footer className="flex h-[15px] items-center justify-between border-t border-[#34353a] pl-[5px] pr-1">
        <span>D:\PadoSample\Spectrum Sweep.wav</span>
        <div className="flex items-center gap-1">
          <span className="mr-1 h-2 w-px bg-[#35363a]" />
          <svg viewBox="0 0 7 6" className="h-1.5 w-[7px]">
            <path d="M0 2h1.4L3.4.4v5.2L1.4 4H0z" fill="#fff" />
            <path d="M4.4 1.4a2 2 0 0 1 0 3.2M5.2.4a3.2 3.2 0 0 1 0 5.2" fill="none" stroke="#dcdcdc" strokeWidth="0.8" />
          </svg>
          <input
            type="range"
            defaultValue={100}
            aria-label="Volume"
            className="h-1.5 w-[54px] appearance-none bg-transparent [&::-webkit-slider-runnable-track]:h-0.5 [&::-webkit-slider-runnable-track]:rounded-full [&::-webkit-slider-runnable-track]:bg-[#2b6fd0] [&::-webkit-slider-thumb]:-mt-0.5 [&::-webkit-slider-thumb]:size-1.5 [&::-webkit-slider-thumb]:appearance-none [&::-webkit-slider-thumb]:rounded-full [&::-webkit-slider-thumb]:bg-[#2f7de6]"
          />
          <span>100%</span>
          <span className="ml-2 h-2 w-px bg-[#35363a]" />
          <span>Dark</span>
          <svg viewBox="0 0 8 8" className="ml-px size-2"><path d="M1 7.5L7.5 1M3.4 7.5L7.5 3.4M5.6 7.5l1.9-1.9" stroke="#8a8c90" /></svg>
        </div>
      </footer>
    </div>
  );
}
